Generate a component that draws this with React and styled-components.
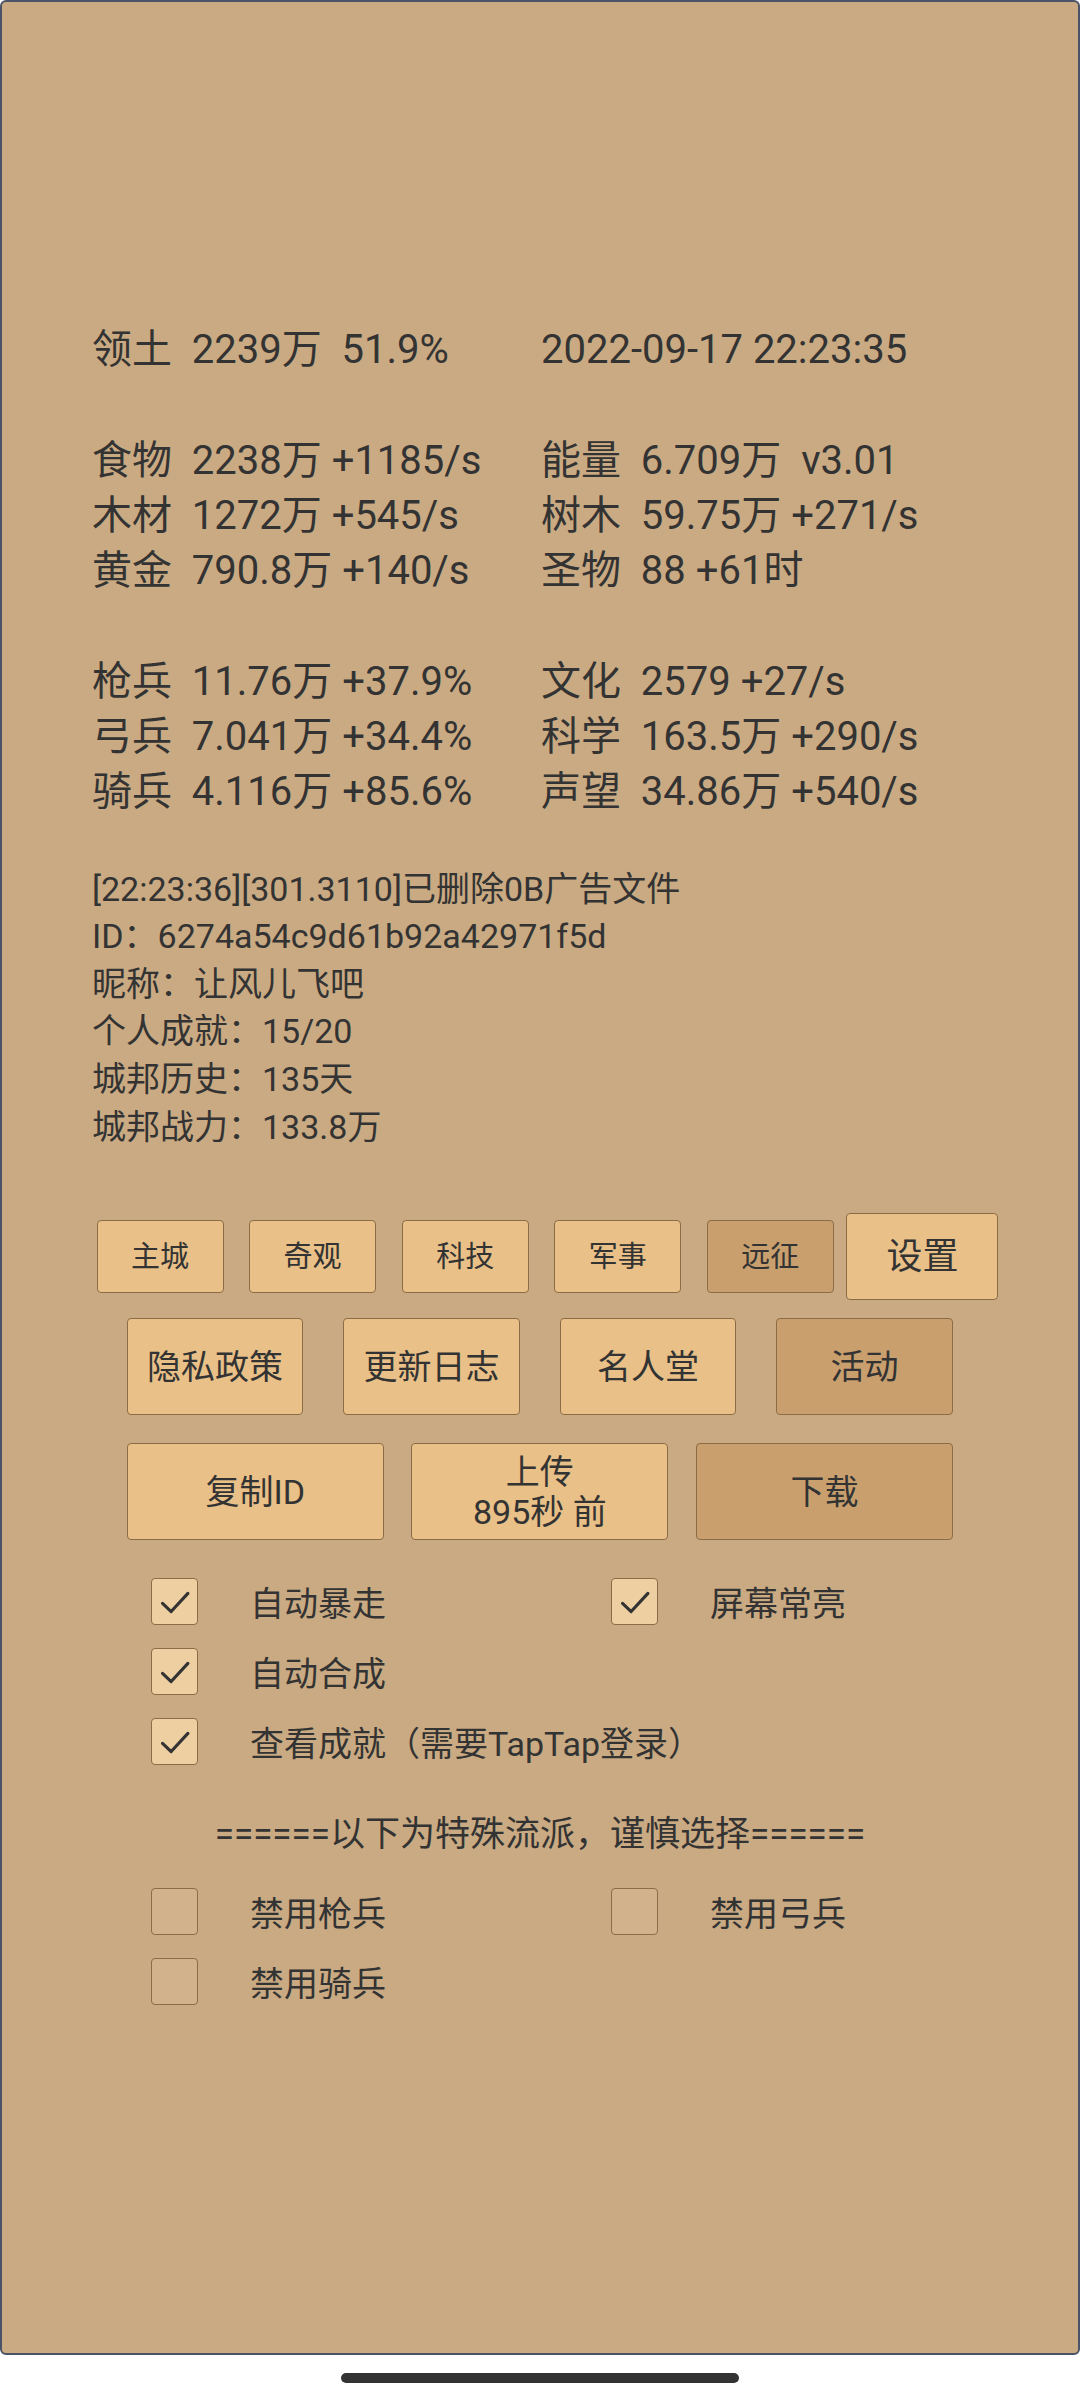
import React from 'react'
import styled, { createGlobalStyle } from 'styled-components'

const GlobalStyle = createGlobalStyle`
  html, body {
    margin: 0;
    padding: 0;
    background: #ffffff;
  }
  * {
    box-sizing: border-box;
  }
`;

const FONT = `Roboto, "Noto Sans CJK SC", "Noto Sans", sans-serif`;

const Screen = styled.div`
  width: 1080px;
  height: 2400px;
  display: flex;
  flex-direction: column;
  align-items: center;
  background: #ffffff;
  font-family: ${FONT};
  color: #333333;
`;

const Frame = styled.div`
  width: 1080px;
  height: 2355px;
  background: #caaa82;
  border: 2px solid #4b5466;
  border-radius: 6px;
  padding-top: 320px;
  display: flex;
  flex-direction: column;
`;

const Stats = styled.div`
  padding-left: 90px;
  font-size: 40px;
  line-height: 55.3px;
`;

const StatGroup = styled.div`
  margin-top: ${p => (p.$first ? 0 : 55.3)}px;
`;

const StatRow = styled.div`
  display: grid;
  grid-template-columns: 449px 1fr;
  white-space: pre;
`;

const Log = styled.div`
  margin-top: 46px;
  padding-left: 90px;
  font-size: 34px;
  line-height: 47.6px;
  white-space: pre;
`;

const ButtonRow = styled.div`
  display: flex;
  align-items: center;
  gap: ${p => p.$gap}px;
  margin-top: ${p => p.$mt}px;
  padding-left: ${p => p.$pl}px;
`;

const GameButton = styled.div`
  width: ${p => p.$w}px;
  height: ${p => p.$h}px;
  margin-left: ${p => p.$ml || 0}px;
  display: flex;
  flex-direction: column;
  align-items: center;
  justify-content: center;
  background: ${p => (p.$dark ? '#c99f6e' : '#e9c087')};
  border: 1.5px solid #8c6c47;
  border-radius: 4px;
  font-size: ${p => p.$fs}px;
  line-height: 40px;
  color: #333333;
  text-align: center;
  white-space: pre;
`;

const Toggles = styled.div`
  margin-top: ${p => p.$mt}px;
  padding-left: 149px;
  display: grid;
  grid-template-columns: 460px 460px;
  row-gap: 23px;
`;

const Toggle = styled.div`
  display: flex;
  align-items: center;
  gap: 52px;
  height: 47px;
  font-size: 34px;
  white-space: nowrap;
`;

const Box = styled.div`
  width: 47px;
  height: 47px;
  flex: none;
  border: 1.5px solid #8c6c47;
  border-radius: 4px;
  background: ${p => (p.$on ? '#eecfa1' : '#d1b28d')};
  display: flex;
  align-items: center;
  justify-content: center;
`;

const Divider = styled.div`
  margin-top: 46px;
  text-align: center;
  font-size: 35px;
  line-height: 47.6px;
  white-space: nowrap;
`;

const HomeBar = styled.div`
  margin-top: 18px;
  width: 398px;
  height: 10px;
  border-radius: 5px;
  background: #333333;
`;

const Tick = () => (
  <svg width="47" height="47" viewBox="0 0 47 47">
    <path d="M11 25.5 L20 34 L37.5 15" fill="none" stroke="#333" strokeWidth="3.3" strokeLinecap="round" strokeLinejoin="round" />
  </svg>
);

const Check = ({ on, label }) => (
  <Toggle>
    <Box $on={on}>{on && <Tick />}</Box>
    <span>{label}</span>
  </Toggle>
);

const App = () => {
  return (
    <Screen>
      <GlobalStyle />
      <Frame>
        <Stats>
          <StatGroup $first>
            <StatRow><span>领土  2239万  51.9%</span><span>2022-09-17 22:23:35</span></StatRow>
          </StatGroup>
          <StatGroup>
            <StatRow><span>食物  2238万 +1185/s</span><span>能量  6.709万  v3.01</span></StatRow>
            <StatRow><span>木材  1272万 +545/s</span><span>树木  59.75万 +271/s</span></StatRow>
            <StatRow><span>黄金  790.8万 +140/s</span><span>圣物  88 +61时</span></StatRow>
          </StatGroup>
          <StatGroup>
            <StatRow><span>枪兵  11.76万 +37.9%</span><span>文化  2579 +27/s</span></StatRow>
            <StatRow><span>弓兵  7.041万 +34.4%</span><span>科学  163.5万 +290/s</span></StatRow>
            <StatRow><span>骑兵  4.116万 +85.6%</span><span>声望  34.86万 +540/s</span></StatRow>
          </StatGroup>
        </Stats>

        <Log>
          <div>[22:23:36][301.3110]已删除0B广告文件</div>
          <div>ID：6274a54c9d61b92a42971f5d</div>
          <div>昵称：让风儿飞吧</div>
          <div>个人成就：15/20</div>
          <div>城邦历史：135天</div>
          <div>城邦战力：133.8万</div>
        </Log>

        <ButtonRow $gap={25.6} $mt={62} $pl={94.5}>
          <GameButton $w={127} $h={73} $fs={29}>主城</GameButton>
          <GameButton $w={127} $h={73} $fs={29}>奇观</GameButton>
          <GameButton $w={127} $h={73} $fs={29}>科技</GameButton>
          <GameButton $w={127} $h={73} $fs={29}>军事</GameButton>
          <GameButton $w={127} $h={73} $fs={29} $dark>远征</GameButton>
          <GameButton $w={152} $h={87} $fs={36} $ml={-13}>设置</GameButton>
        </ButtonRow>

        <ButtonRow $gap={40} $mt={18} $pl={124.7}>
          <GameButton $w={176.5} $h={97} $fs={34}>隐私政策</GameButton>
          <GameButton $w={176.5} $h={97} $fs={34}>更新日志</GameButton>
          <GameButton $w={176.5} $h={97} $fs={34}>名人堂</GameButton>
          <GameButton $w={176.5} $h={97} $fs={34} $dark>活动</GameButton>
        </ButtonRow>

        <ButtonRow $gap={27.7} $mt={28} $pl={124.7}>
          <GameButton $w={257} $h={97} $fs={34}>复制ID</GameButton>
          <GameButton $w={257} $h={97} $fs={34}>{'上传\n895秒 前'}</GameButton>
          <GameButton $w={257} $h={97} $fs={34} $dark>下载</GameButton>
        </ButtonRow>

        <Toggles $mt={38}>
          <Check on label="自动暴走" />
          <Check on label="屏幕常亮" />
          <Check on label="自动合成" />
          <div />
          <Check on label="查看成就（需要TapTap登录）" />
          <div />
        </Toggles>

        <Divider>======以下为特殊流派，谨慎选择======</Divider>

        <Toggles $mt={29}>
          <Check label="禁用枪兵" />
          <Check label="禁用弓兵" />
          <Check label="禁用骑兵" />
        </Toggles>
      </Frame>
      <HomeBar />
    </Screen>
  )
}

export default App
